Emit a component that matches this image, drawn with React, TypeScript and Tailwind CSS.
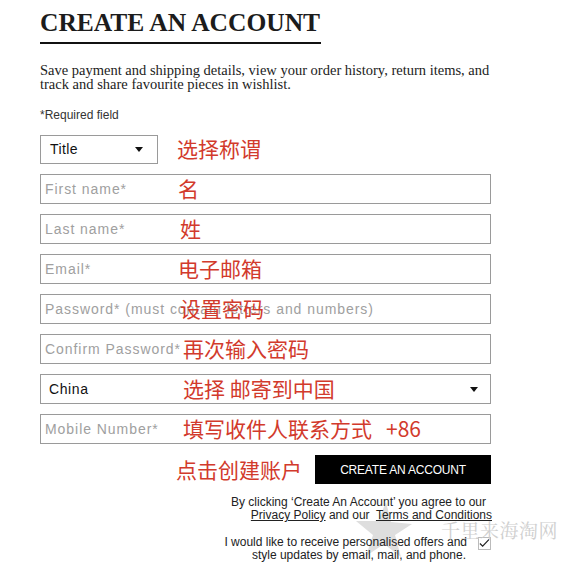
import React from 'react'

const serif = "font-['Liberation_Serif','Times_New_Roman',serif]"
const sans = "font-['Liberation_Sans',Arial,sans-serif]"
const note = "font-['Noto_Sans_CJK_SC',sans-serif] text-[21px] leading-none text-[#d23a2c]"

interface FieldProps {
  placeholder: string
  annotation: string
  left?: number
}

const Field = ({ placeholder, annotation, left = 137 }: FieldProps) => (
  <div className="relative flex h-[30px] w-[451px] items-center border border-[#9a9a9a] px-[4px]">
    <span className={`${sans} text-[14px] tracking-[0.95px] text-[#a0a0a0]`}>{placeholder}</span>
    <span className={`absolute top-[3px] ${note}`} style={{ left }}>
      {annotation}
    </span>
  </div>
)

const Caret = () => (
  <svg width="8" height="5" viewBox="0 0 8 5">
    <path d="M0 0h8L4 5z" fill="#111" />
  </svg>
)

export default function App() {
  return (
    <div className="relative isolate h-[576px] w-[569px] overflow-hidden bg-white pl-10 pt-[9px]">
      {/* Titre */}
      <h1
        className={`${serif} w-[281px] whitespace-nowrap border-b-2 border-[#111] pb-[5px] text-[25.5px] font-bold leading-[28px] text-[#1c1c1c]`}
      >
        CREATE AN ACCOUNT
      </h1>

      <p className={`${serif} mt-[19px] w-[452px] text-[14.5px] leading-[14px] text-[#222]`}>
        Save payment and shipping details, view your order history, return items, and track and share
        favourite pieces in wishlist.
      </p>

      <p className={`${sans} mt-[17px] text-[12px] leading-[14px] text-[#333]`}>*Required field</p>

      {/* Formulaire */}
      <div className="mt-[13px] flex w-[451px] flex-col gap-[10px]">
        <div className="relative h-[29px]">
          <div className="flex h-[29px] w-[118px] items-center justify-between border border-[#9a9a9a] pl-[9px] pr-[14px]">
            <span className={`${sans} text-[14px] tracking-[0.4px] text-[#111]`}>Title</span>
            <Caret />
          </div>
          <span className={`absolute left-[137px] top-[3px] ${note}`}>选择称谓</span>
        </div>

        <Field placeholder="First name*" annotation="名" />
        <Field placeholder="Last name*" annotation="姓" left={139} />
        <Field placeholder="Email*" annotation="电子邮箱" />
        <Field placeholder="Password* (must contain letters and numbers)" annotation="设置密码" left={139} />
        <Field placeholder="Confirm Password*" annotation="再次输入密码" left={142} />

        <div className="relative flex h-[30px] w-[451px] items-center justify-between border border-[#9a9a9a] pl-[8px] pr-[12px]">
          <span className={`${sans} text-[14px] tracking-[0.6px] text-[#111]`}>China</span>
          <Caret />
          <span className={`absolute left-[142px] top-[3px] ${note}`}>选择 邮寄到中国</span>
        </div>

        <div className="relative flex h-[30px] w-[451px] items-center border border-[#9a9a9a] px-[4px]">
          <span className={`${sans} text-[14px] tracking-[0.95px] text-[#a0a0a0]`}>Mobile Number*</span>
          <span className={`absolute left-[142px] top-[3px] ${note}`}>
            填写收件人联系方式<span className="ml-[14px]">+86</span>
          </span>
        </div>

        <div className="flex items-center justify-end gap-[13px] pt-[1px]">
          <span className={note}>点击创建账户</span>
          <button
            className={`${sans} flex h-[29px] w-[176px] items-center justify-center bg-black text-[12px] tracking-[-0.2px] text-white`}
          >
            CREATE AN ACCOUNT
          </button>
        </div>
      </div>

      {/* Mentions */}
      <div className={`${sans} mt-[12px] w-[452px] text-right text-[12px] leading-[13px] text-[#222]`}>
        <div className="pr-[6px]">By clicking ‘Create An Account’ you agree to our</div>
        <div>
          <span className="underline">Privacy Policy</span> and our{' '}
          <span className="ml-[3px] underline">Terms and Conditions</span>
        </div>
      </div>

      <div className="mt-[14px] flex w-[451px] items-start justify-end">
        <div className={`${sans} text-right text-[12px] leading-[13px] text-[#222]`}>
          <div>I would like to receive personalised offers and</div>
          <div className="pr-[1px]">style updates by email, mail, and phone.</div>
        </div>
        <div className="ml-[11px] mt-[1px] flex h-[13px] w-[13px] items-center justify-center border border-[#bbb]">
          <svg width="12" height="10" viewBox="0 0 12 10" className="-mt-[2px]">
            <path d="M1 5.5l3 3L11 1" fill="none" stroke="#222" strokeWidth="1.3" />
          </svg>
        </div>
      </div>

      {/* Filigrane */}
      <svg
        className="pointer-events-none absolute left-[352px] top-[500px] -z-10"
        width="62"
        height="60"
        viewBox="0 0 62 60"
      >
        <path
          d="M34 2l5 20 21 2-17 11 6 22-17-13-18 12 7-21L4 21l22 0z"
          fill="#dedede"
        />
      </svg>
      <div className="pointer-events-none absolute left-[441px] top-[516px] whitespace-nowrap font-['Noto_Serif_CJK_SC','Noto_Sans_CJK_SC',serif] text-[19px] tracking-[0.5px] text-[#cfcfcf]">
        千里来海淘网
      </div>
    </div>
  )
}
